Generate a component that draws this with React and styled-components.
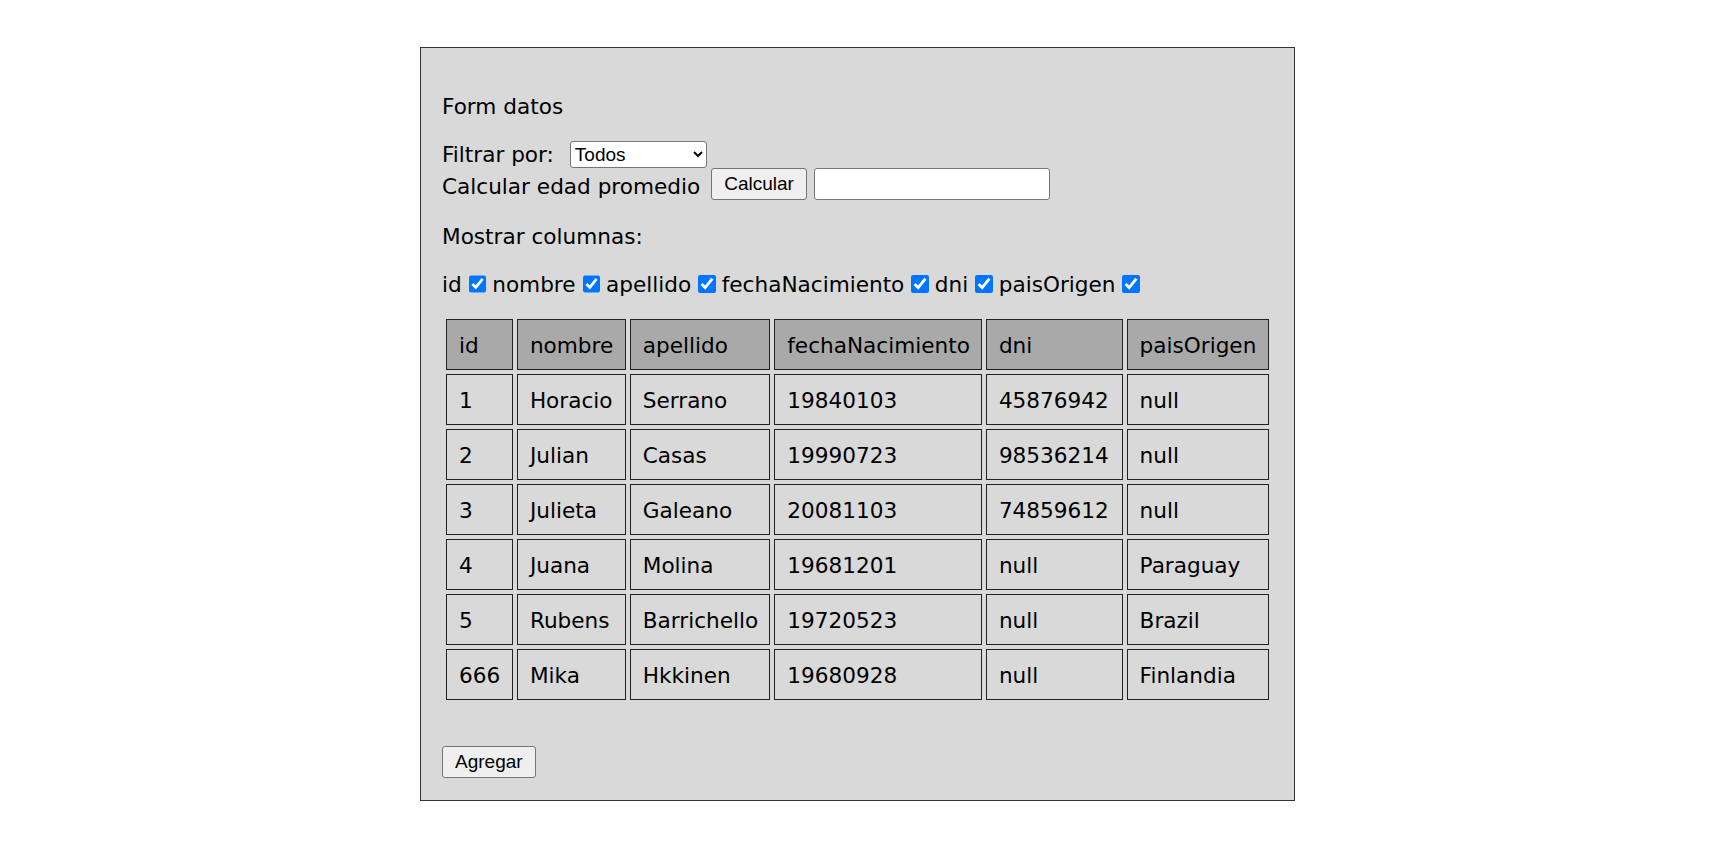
import React from 'react'
import styled, { createGlobalStyle } from 'styled-components'

const GlobalStyle = createGlobalStyle`
    body {
        margin: 0;
        background: #ffffff;
        font-family: "DejaVu Sans", Verdana, sans-serif;
        color: #000000;
    }
`

const Panel = styled.div`
    box-sizing: border-box;
    width: 875px;
    margin: 47px 0 0 420px;
    padding: 24px 21px 22px;
    background-color: #d9d9d9;
    border: 1px solid #333333;
    font-size: 21.6px;
    line-height: 26px;
    display: flex;
    flex-direction: column;
    align-items: flex-start;
`

const Text = styled.p`
    margin: ${(p) => p.$margin || '0'};
`

const Row = styled.div`
    display: flex;
    align-items: ${(p) => p.$align || 'center'};
    height: ${(p) => p.$height}px;
`

const Select = styled.select`
    box-sizing: border-box;
    width: 137px;
    height: 27px;
    margin-left: 16px;
    padding-left: 0;
    font-family: "Liberation Sans", Arial, sans-serif;
    font-size: 19px;
    border: 1px solid #767676;
    border-radius: 3px;
    background: #ffffff;
    color: #000000;
`

const Button = styled.button`
    box-sizing: border-box;
    height: 32px;
    padding: 0 12px;
    margin-left: ${(p) => p.$ml || 0}px;
    margin-top: ${(p) => p.$mt || 0}px;
    font-family: "Liberation Sans", Arial, sans-serif;
    font-size: 19px;
    color: #000000;
    background: #efefef;
    border: 1px solid #767676;
    border-radius: 3px;
`

const Input = styled.input`
    box-sizing: border-box;
    width: 236px;
    height: 32px;
    margin-left: 7px;
    background: #ffffff;
    border: 1px solid #767676;
    border-radius: 3px;
`

const Checks = styled.div`
    display: flex;
    align-items: center;
    gap: 6px;
    margin-top: 22px;
`

const CheckLabel = styled.label`
    display: flex;
    align-items: center;
    gap: 7px;
`

const Check = styled.input`
    width: 17.5px;
    height: 17.5px;
    margin: 0 0 2px;
    accent-color: #0075ff;
`

const Table = styled.table`
    border-collapse: separate;
    border-spacing: 4px;
    margin-top: 17px;
    table-layout: fixed;
`

const Cell = styled.td`
    box-sizing: border-box;
    height: 51px;
    padding: 13px 11px 10px 12px;
    border: 1px solid #222222;
    text-align: left;
    font-weight: normal;
    white-space: nowrap;
    background-color: ${(p) => (p.$head ? '#a9a9a9' : '#d9d9d9')};
`

const columns = [
    ['id', 67],
    ['nombre', 109],
    ['apellido', 140],
    ['fechaNacimiento', 206],
    ['dni', 137],
    ['paisOrigen', 142.5],
]

const personas = [
    ['1', 'Horacio', 'Serrano', '19840103', '45876942', 'null'],
    ['2', 'Julian', 'Casas', '19990723', '98536214', 'null'],
    ['3', 'Julieta', 'Galeano', '20081103', '74859612', 'null'],
    ['4', 'Juana', 'Molina', '19681201', 'null', 'Paraguay'],
    ['5', 'Rubens', 'Barrichello', '19720523', 'null', 'Brazil'],
    ['666', 'Mika', 'Hkkinen', '19680928', 'null', 'Finlandia'],
]

const App = () => {
    return (
        <>
            <GlobalStyle />
            <Panel>
                <Text $margin='22px 0 21px'>Form datos</Text>
                <Row $height={27}>
                    <span>Filtrar por:</span>
                    <Select defaultValue='Todos'>
                        <option>Todos</option>
                        <option>Argentinos</option>
                        <option>Extranjeros</option>
                    </Select>
                </Row>
                <Row $height={32} $align='flex-end'>
                    <span>Calcular edad promedio</span>
                    <Button $ml={11}>Calcular</Button>
                    <Input type='text' />
                </Row>
                <Text $margin='24px 0 0'>Mostrar columnas:</Text>
                <Checks>
                    {columns.map(([name]) => (
                        <CheckLabel key={name}>
                            {name}
                            <Check type='checkbox' defaultChecked />
                        </CheckLabel>
                    ))}
                </Checks>
                <Table>
                    <thead>
                        <tr>
                            {columns.map(([name, w]) => (
                                <Cell as='th' $head key={name} style={{ width: w }}>{name}</Cell>
                            ))}
                        </tr>
                    </thead>
                    <tbody>
                        {personas.map((p) => (
                            <tr key={p[0]}>
                                {p.map((v, i) => <Cell key={i}>{v}</Cell>)}
                            </tr>
                        ))}
                    </tbody>
                </Table>
                <Button $mt={42}>Agregar</Button>
            </Panel>
        </>
    )
}

export default App
